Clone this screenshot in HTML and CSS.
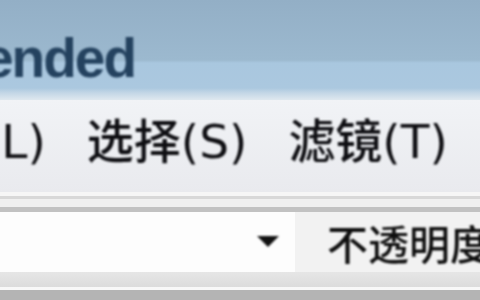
FILE: index.html
```html
<!DOCTYPE html>
<html lang="zh-CN">
<head>
    <meta charset="UTF-8">
    <meta name="viewport" content="width=device-width, initial-scale=1.0">
    <title>Photoshop Extended</title>
    <link rel="stylesheet" href="styles.css">
</head>
<body>
    <div class="window">
        <div class="titlebar">
            <span class="title">Extended</span>
        </div>
        <div class="menubar">
            <span class="menu-item first">图层(L)</span>
            <span class="menu-item">选择(S)</span>
            <span class="menu-item">滤镜(T)</span>
        </div>
        <div class="separator"></div>
        <div class="options">
            <div class="dropdown">
                <span class="arrow"></span>
            </div>
            <span class="label">不透明度:</span>
        </div>
        <div class="statusline"></div>
    </div>
</body>
</html>
```

FILE: styles.css
```css
body {
    margin: 0;
    padding: 0;
    background-color: #f0f0f0;
}
.window {
    width: 480px;
    height: 300px;
    overflow: hidden;
    display: flex;
    flex-direction: column;
}
.titlebar {
    height: 100px;
    flex: none;
    background: linear-gradient(to bottom, #93afc6 0, #9cb9cf 60px, #a9c7df 63px, #abc8df 88px, #c4d7e6 93px, #dfe8ef 100px);
    position: relative;
}
.title {
    position: absolute;
    right: 345px;
    top: 26px;
    font-family: "Liberation Sans", Arial, sans-serif;
    font-weight: bold;
    font-size: 55px;
    letter-spacing: -2px;
    color: #24425f;
    filter: blur(1.2px);
    white-space: nowrap;
}
.menubar {
    height: 92px;
    flex: none;
    display: flex;
    align-items: center;
    gap: 41px;
    padding-bottom: 18px;
    box-sizing: border-box;
    background: linear-gradient(to bottom, #f1f3f6, #e9eaee);
}
.menu-item {
    flex: none;
    font-family: "DejaVu Sans", "Noto Sans CJK SC", sans-serif;
    font-size: 47px;
    font-weight: 500;
    color: #0e0e12;
    white-space: nowrap;
    filter: blur(1.2px);
}
.menu-item.first {
    margin-left: -111px;
}
.separator {
    height: 20px;
    flex: none;
    background: linear-gradient(to bottom, #f6f6f6 0, #f6f6f6 4px, #d8d8d8 4px, #d8d8d8 7px, #f0f0f0 7px, #f0f0f0 15px, #c2c2c2 15px, #c2c2c2 20px);
}
.options {
    height: 60px;
    flex: none;
    display: flex;
    align-items: center;
    background-color: #f2f2f2;
}
.dropdown {
    flex: none;
    width: 295px;
    height: 60px;
    background-color: #fdfdfd;
    display: flex;
    align-items: center;
    justify-content: flex-end;
    padding-right: 16px;
    padding-bottom: 2px;
    box-sizing: border-box;
}
.arrow {
    width: 0;
    height: 0;
    border-left: 11px solid transparent;
    border-right: 11px solid transparent;
    border-top: 11px solid #111;
    filter: blur(1px);
}
.label {
    flex: none;
    margin-left: 32px;
    font-family: "Noto Sans CJK SC", sans-serif;
    font-size: 41px;
    font-weight: 500;
    color: #0e0e0e;
    white-space: nowrap;
    filter: blur(1.2px);
}
.statusline {
    flex: 1;
    background: linear-gradient(to bottom, #e6e6e6 0, #dcdcdc 15px, #f8f8f8 15px, #f8f8f8 18px, #b4b4b4 18px);
}
```
